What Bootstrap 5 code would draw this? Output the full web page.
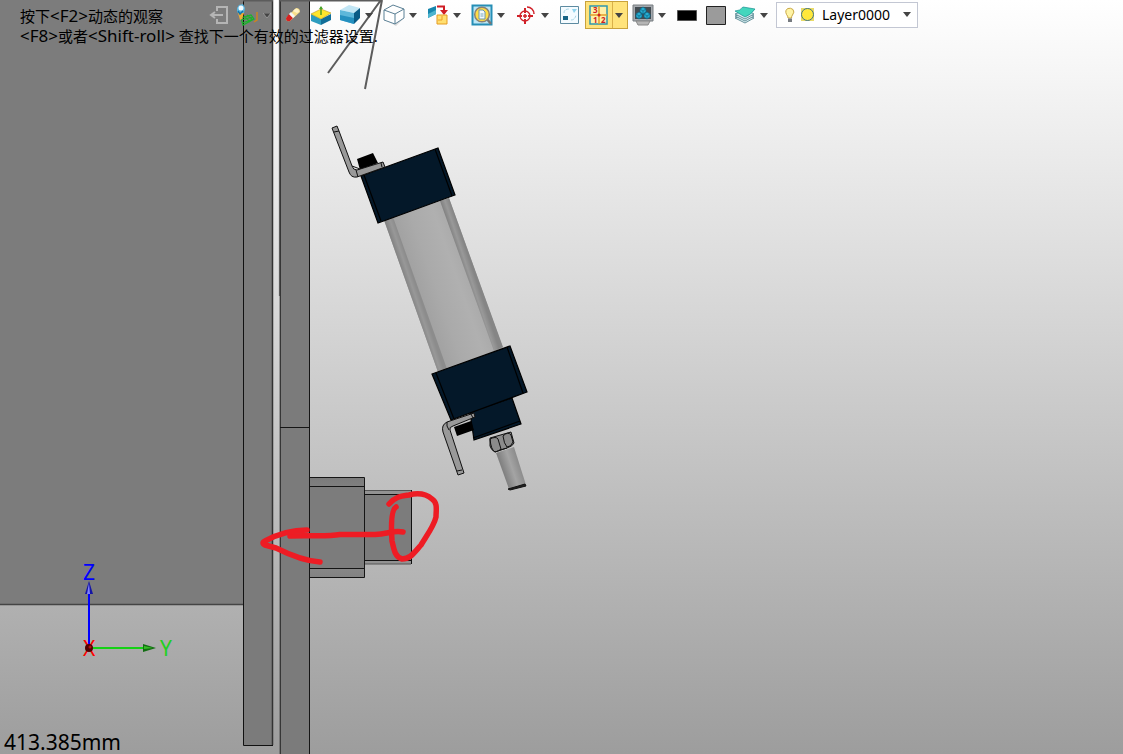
<!DOCTYPE html>
<html lang="zh-CN">
<head>
<meta charset="utf-8">
<meta name="viewport" content="width=device-width, initial-scale=1">
<title>Model view</title>
<link href="https://cdn.jsdelivr.net/npm/bootstrap@5.3.0/dist/css/bootstrap.min.css" rel="stylesheet">
<style>
  body { font-family: "Noto Sans", "Noto Sans CJK SC", sans-serif; color: #000; }
  .viewport { background: linear-gradient(#ffffff, #9d9d9d); }
  .scene { pointer-events: none; }
  .scene text { font-size: 21px; }
  .hint { font-size: 15px; line-height: 16px; padding-left: 20px; }
  .hint span { font-size: 17px; }
  .hint-lead { width: 206px; }
  .toolbar { gap: 3px; height: 28px; padding-top: 2px; }
  .tool, .drop { height: 26px; border: 0; padding: 0; background: transparent; display: flex; align-items: center; justify-content: center; }
  .tool { width: 26px; }
  .drop { width: 15px; padding-right: 3px; }
  .tool svg { width: 22px; height: 22px; }
  .split-on { background: #ffe37b; box-shadow: 0 0 0 1px #c9a23c; }
  .split-on .drop { border-left: 1px solid #d9b04a; }
  .layer-box { width: 142px; }
  .layer-box select { height: 26px; padding: 0 0 0 45px; border: 1px solid #c3c7d3; background: #fff; font-size: 14px; line-height: 24px; appearance: none; color: #000; }
  .layer-icons { left: 6px; top: 2px; pointer-events: none; }
  .layer-arrow { right: 7px; top: 10px; pointer-events: none; }
  .readout { font-size: 21px; line-height: 24px; padding-left: 4px; }
</style>
</head>
<body>
<main class="viewport position-relative min-vh-100 d-flex flex-column overflow-hidden">

  <svg class="scene position-absolute top-0 start-0 w-100 h-100" viewBox="0 0 1123 754" preserveAspectRatio="xMinYMin slice" aria-hidden="true">
    <defs>
      <linearGradient id="tube" gradientUnits="userSpaceOnUse" x1="393" y1="217" x2="447" y2="198">
        <stop offset="0" stop-color="#a2a2a2"/><stop offset=".3" stop-color="#aaaaaa"/><stop offset=".7" stop-color="#b0b0b0"/><stop offset="1" stop-color="#a8a8a8"/>
      </linearGradient>
      <linearGradient id="rodA" gradientUnits="userSpaceOnUse" x1="384" y1="220" x2="393" y2="217">
        <stop offset="0" stop-color="#808080"/><stop offset=".6" stop-color="#989898"/><stop offset="1" stop-color="#8c8c8c"/>
      </linearGradient>
      <linearGradient id="rodB" gradientUnits="userSpaceOnUse" x1="440" y1="201" x2="449" y2="198">
        <stop offset="0" stop-color="#808080"/><stop offset=".5" stop-color="#999999"/><stop offset="1" stop-color="#858585"/>
      </linearGradient>
      <linearGradient id="shaft" gradientUnits="userSpaceOnUse" x1="497" y1="453" x2="515" y2="447">
        <stop offset="0" stop-color="#808080"/><stop offset=".5" stop-color="#a4a4a4"/><stop offset="1" stop-color="#888888"/>
      </linearGradient>
      <linearGradient id="edge" x2="0" y2="1">
        <stop offset="0" stop-color="#7b7b7b"/><stop offset=".6" stop-color="#989898"/><stop offset="1" stop-color="#828282"/>
      </linearGradient>
    </defs>

    <!-- frame plates -->
    <path d="M0 0H243V604H0Z" fill="#7c7c7c"/>
    <path d="M0 604.5H243" stroke="#444" stroke-width="1.5"/>
    <path d="M243 0H273V745H243Z" fill="#7b7b7b"/>
    <path d="M243.500 0V745.500H273" fill="none" stroke="#111"/>
    <path d="M272.500 0V745" stroke="#333" stroke-width="1.500"/>
    <path d="M279.500 0H310V754H280V296H279.500Z" fill="#7b7b7b"/>
    <path d="M280.300 0V754" stroke="#333" stroke-width="1.300"/>
    <path d="M279.400 0V296" stroke="#555"/>
    <path d="M309.500 0V754M280 427.500H310" stroke="#151515" fill="none"/>
    <path d="M243 .5H273M280 .5H382M381 0L328 73M382 0L365 89" stroke="#5c5c5c" stroke-width="2" fill="none"/>

    <!-- side blocks -->
    <path d="M310 477H364V577H310Z" fill="#7c7c7c"/>
    <path d="M310 477H364V486H310ZM310 569H364V577H310Z" fill="url(#edge)"/>
    <path d="M310 477.500H364.500V577.500H310M310 486.500H364M310 568.500H364" fill="none" stroke="#151515"/>
    <path d="M365 490H411V564H365Z" fill="#7c7c7c"/>
    <path d="M365 491H411V494H365ZM365 561H411V564H365Z" fill="#929292"/>
    <path d="M365 490.500H411M365 564H411" stroke="#555"/>
    <path d="M365 494.500H411M365 560.500H411M411.500 490V564" stroke="#111"/>

    <!-- cylinder -->
    <path d="M384 220L449 198L503 348L438 372Z" fill="url(#tube)"/>
    <path d="M384 220L393 217L447 369L438 372Z" fill="url(#rodA)"/>
    <path d="M440 201L449 198L503 347L494 351Z" fill="url(#rodB)"/>
    <g fill="#041829" stroke="#000" stroke-width="1.200">
      <path d="M361 176L438 148L455 195L378 223Z"/>
      <path d="M364 175L381 221M435 149L452 196"/>
      <path d="M470 412L512 398L521 424L474 440Z"/>
      <path d="M432 374L510 346L527 392L451 420Z"/>
      <path d="M436 373L454 419M507 347L523 393M473 438L520 421"/>
    </g>
    <path d="M357 159L373 153L378 163L360 170Z M454 427L471 421L474 430L457 436Z" fill="#000"/>
    <g fill="#999" stroke="#111" stroke-linejoin="round">
      <path d="M332 128L337 126L339 131L352 166Q353 170 357 170L383 162L385 167L357 177Q351 178 349 172L333.500 132Z"/>
      <path d="M334 132L339 131M381 163L382 167M352 166L360 169M356 170L358 177" fill="none"/>
      <path d="M474 413L447 422Q441 425 443 432L458 475L464 473L450 430Q449 427 453 426L475 417Z"/>
      <path d="M457 471L462 470M447 422Q446 426 449 430M471 414L473 418" fill="none"/>
    </g>
    <path d="M496 453L514 447L526 485L509 489Z" fill="url(#shaft)"/>
    <path d="M508 489L525 484L526 486L510 490Z" fill="#222" stroke="#111"/>
    <path d="M490 438L511 432L514 443Q513 446 507 448L495 452Q491 450 490 446Z" fill="#8b8b8b" stroke="#111"/>
    <path d="M490 439Q496 436 498 439L501 449Q499 451 495 452Q491 450 490 439M503 436Q508 431 511 435L513 442Q511 447 507 447Q504 444 503 436M500 450L507 448" fill="none" stroke="#111"/>

    <!-- red pen marks -->
    <g fill="none" stroke="#ee1c24" stroke-width="5.500" stroke-linecap="round" stroke-linejoin="round">
      <path d="M389 504C396 496 402 496 409 495C417 493 425 493 432 499C438 503 436 510 436 517C434 526 427 535 421 545C413 554 410 559 402 559C395 557 394 550 392 541C391 526 391 510 396 507"/>
      <path d="M403 532C393 530 388 534 375 534.500L340 534.500C326 537 310 535 290 536"/>
      <path d="M307 530C292 530 276 535 265 541Q261 543 265 545L276 548C290 555 304 561 320 562"/>
    </g>

    <!-- axis triad -->
    <path d="M89 648V594" stroke="#0000ff" stroke-width="2"/>
    <path d="M89 581L93 594H85Z" fill="#1515a5"/><path d="M89 583L90 594H87Z" fill="#8080ff"/>
    <path d="M89 648H143" stroke="#14d114" stroke-width="2"/>
    <path d="M156 648L143 644V652Z" fill="#126d12"/><path d="M153 648L144 646V649Z" fill="#35bd25"/>
    <text x="83" y="656" fill="#ff0000" >X</text>
    <circle cx="89" cy="648" r="4" fill="#500000"/>
    <circle cx="90" cy="647" r="1.500" fill="#b01010"/>
    <text x="83" y="580" fill="#0000ff">Z</text>
    <text x="160" y="656" fill="#20d020">Y</text>
  </svg>

  <header class="position-relative">
    <div class="d-flex">
      <p class="hint hint-lead mb-0 flex-shrink-0 pt-2">按下<span>&lt;F2&gt;</span>动态的观察</p>
      <div class="toolbar d-flex flex-shrink-0" role="toolbar" aria-label="View tools">
        <button class="tool" aria-label="Exit"><svg viewBox="0 0 22 22" fill="none" stroke="#b5b5b5" stroke-width="2"><path d="M9 7V3H19V19H9V15"/><path d="M15 11H4M7 8L3 11L7 14"/></svg></button>
        <div class="d-flex">
          <button class="tool" aria-label="Walk"><svg viewBox="0 0 22 22"><path d="M4 14L14 11L17 15L6 21ZM7 12L13 18M10 11L16 16M4 16L16 13M5 19L17 15" fill="none" stroke="#18b529" stroke-width="1.200"/><path d="M20 8V16L17 18" fill="none" stroke="#cc8420" stroke-width="1.500"/><path d="M0 4L2 1L6 0L8 4L7 9L3 10L0 8Z" fill="#5bb5df"/><circle cx="4" cy="4" r="2.500" fill="#f4fbff"/><path d="M1 9L7 9L5 15L3 16Z" fill="#f0ad35"/><path d="M1 7L3 10L6 7" fill="none" stroke="#1673a8" stroke-width="1.500"/></svg></button>
          <button class="drop" aria-label="Walk options"><svg width="8" height="5"><path d="M0 0H8L4 5Z" fill="#444" stroke="#aaa" stroke-width=".7"/></svg></button>
        </div>
        <button class="tool" aria-label="Erase"><svg viewBox="0 0 22 22"><path d="M5 14L15 4Q19 4 19 8L9 17Q5 18 5 14Z" fill="#f7df8b"/><path d="M5 14L8 10L12 14L9 17Q5 18 5 14Z" fill="#d62222"/><path d="M8 10L10 8L14 12L12 14Z" fill="#f4f4f4"/><path d="M14 5Q18 4 18 8L16 9L12 7Z" fill="#fff2c4"/></svg></button>
        <button class="tool" aria-label="Workplane"><svg viewBox="0 0 22 22"><path d="M1 10L11 15V21L1 17Z" fill="#2c9cbe"/><path d="M11 15L21 10V16L11 21Z" fill="#126f98"/><path d="M1 10L11 5L21 9L11 15Z" fill="#ffe62c" stroke="#bd9720" stroke-width=".6"/><path d="M11 11V3" stroke="#3a9222" stroke-width="1.300"/><path d="M11 2L13 5H9Z" fill="#48a52a"/></svg></button>
        <div class="d-flex">
          <button class="tool" aria-label="Shaded"><svg viewBox="0 0 22 22"><path d="M1 6L10 1L21 4L15 9Z" fill="#c2e6f5"/><path d="M1 6L15 9V20L1 16Z" fill="#5db7da"/><path d="M1 11L15 14V20L1 16Z" fill="#2590bf"/><path d="M15 9L21 4V14L15 20Z" fill="#095b86"/></svg></button>
          <button class="drop" aria-label="Shading options"><svg width="8" height="5"><path d="M0 0H8L4 5Z" fill="#444"/></svg></button>
        </div>
        <div class="d-flex">
          <button class="tool" aria-label="Wireframe"><svg viewBox="0 0 22 22"><path d="M2 16L10 20L20 15L13 22Z" fill="#bbb" opacity=".5"/><path d="M1 6L10 1L21 5V14L12 20L1 16ZM1 6L12 10L21 5M12 10V20" fill="#fff" stroke="#5b8095" stroke-linejoin="round"/></svg></button>
          <button class="drop" aria-label="Wireframe options"><svg width="8" height="5"><path d="M0 0H8L4 5Z" fill="#444"/></svg></button>
        </div>
        <div class="d-flex">
          <button class="tool" aria-label="Align view"><svg viewBox="0 0 22 22"><path d="M1 5L9 2V10L1 14Z" fill="#1686ad"/><path d="M1 10L9 6V10L1 14Z" fill="#4db4ce"/><path d="M10 2.500H17V8" fill="none" stroke="#cf1d25" stroke-width="2"/><path d="M13 6H21L17 11Z" fill="#cf1d25"/><path d="M10 11H20V20H10Z" fill="#ffdf70" stroke="#e59b20"/><path d="M11 16H15V12" fill="none" stroke="#ef9f26"/></svg></button>
          <button class="drop" aria-label="Align options"><svg width="8" height="5"><path d="M0 0H8L4 5Z" fill="#444"/></svg></button>
        </div>
        <div class="d-flex">
          <button class="tool" aria-label="Zoom all"><svg viewBox="0 0 22 22"><path d="M1.500 1.500H20.500V20.500H1.500Z" fill="#bce7f6" stroke="#268eb5" stroke-width="2"/><path d="M16 15L20 20" stroke="#777" stroke-width="2.500"/><circle cx="11" cy="10.500" r="7.300" fill="#ffdc45" stroke="#8b8175" stroke-width="1.500"/><path d="M8 6H12L14 8V15H8Z" fill="#f3f9fc" stroke="#6d96a9"/><path d="M9.500 10H12.500M9.500 12H12.500" stroke="#79a9c0"/></svg></button>
          <button class="drop" aria-label="Zoom options"><svg width="8" height="5"><path d="M0 0H8L4 5Z" fill="#444"/></svg></button>
        </div>
        <div class="d-flex">
          <button class="tool" aria-label="Rotate centre"><svg viewBox="0 0 22 22" fill="none" stroke="#d02028"><circle cx="10" cy="12" r="5" stroke-width="1.300"/><path d="M10 4V9M10 15V20M2 12H7M13 12H18" stroke-width="2"/><path d="M8 12H12M10 10V14" stroke-width="1.500"/><path d="M12 3C16 3 19 6 19 10" stroke-width="1.500"/></svg></button>
          <button class="drop" aria-label="Rotate options"><svg width="8" height="5"><path d="M0 0H8L4 5Z" fill="#444"/></svg></button>
        </div>
        <button class="tool" aria-label="View window"><svg viewBox="0 0 22 22"><path d="M1.500 2.500H19.500V19.500H1.500Z" fill="#f4fbff" stroke="#5d8ba1"/><path d="M4 12H9V16H4Z" fill="#176486"/><path d="M5 9Q5 5 10 5M12 16Q16 16 17 11" fill="none" stroke="#a7d5e5" stroke-dasharray="3 1"/><path d="M13 5H18L15 9Z" fill="#91d4ed"/></svg></button>
        <div class="d-flex split-on">
          <button class="tool" aria-label="Numbered views"><svg viewBox="0 0 22 22"><path d="M2 2H19V20H2Z" fill="#fff0a8" stroke="#3097ad" stroke-width="1.500"/><path d="M11 2V11H19M2 11H11V20" fill="none" stroke="#e1a12a" stroke-width="1.500"/><g fill="#d02020" font-size="8" font-weight="700"><text x="5" y="9">3</text><text x="5" y="19">1</text><text x="13" y="19">2</text></g><circle cx="11" cy="11" r="1.500" fill="#d02020"/></svg></button>
          <button class="drop" aria-label="Numbered view options"><svg width="8" height="5"><path d="M0 0H8L4 5Z" fill="#444"/></svg></button>
        </div>
        <div class="d-flex">
          <button class="tool" aria-label="Display"><svg viewBox="0 0 22 22"><path d="M1 1H21V17H1Z" fill="#a6aaaf" stroke="#777c80"/><path d="M3 3H19V15H3Z" fill="#434b51"/><path d="M4 17H18L16 21H6Z" fill="#b5b5b5" stroke="#888"/><g fill="#27add0" stroke="#0b6687" stroke-width=".7"><path d="M8 5L11 3L14 5V8L11 10L8 8ZM4 10L7 8L10 10V13L7 15L4 13ZM12 10L15 8L18 10V13L15 15L12 13Z"/><path d="M8 5L11 7L14 5M11 7V10M4 10L7 12L10 10M7 12V15M12 10L15 12L18 10M15 12V15" fill="none"/></g></svg></button>
          <button class="drop" aria-label="Display options"><svg width="8" height="5"><path d="M0 0H8L4 5Z" fill="#444"/></svg></button>
        </div>
        <button class="tool" aria-label="Line colour"><svg viewBox="0 0 22 22"><path d="M1.500 6.500H20.500V16.500H1.500Z" stroke="#555"/></svg></button>
        <button class="tool" aria-label="Face colour"><svg viewBox="0 0 22 22"><path d="M1.500 2.500H20.500V20.500H1.500Z" fill="#9b9b9b" stroke="#222"/></svg></button>
        <div class="d-flex">
          <button class="tool" aria-label="Layers"><svg viewBox="0 0 22 22"><g fill="#d8edf0" stroke="#477b87" stroke-width=".8"><path d="M1 14L11 19L20 14L12 10Z"/><path d="M1 12L11 17L20 12L12 8Z"/><path d="M1 10L11 15L20 10L12 6Z"/></g><path d="M1 7Q6 7 9 3L21 5Q17 11 11 13Z" fill="#43d6bd" stroke="#168f91" stroke-width=".7"/></svg></button>
          <button class="drop" aria-label="Layer options"><svg width="8" height="5"><path d="M0 0H8L4 5Z" fill="#444"/></svg></button>
        </div>
        <div class="layer-box position-relative">
          <label class="visually-hidden" for="layer">Layer</label>
          <select id="layer" class="w-100 d-block rounded-0"><option>Layer0000</option></select>
          <svg class="layer-icons position-absolute" width="36" height="22" viewBox="0 0 36 22"><path d="M6 14Q6 12 4.500 10.500Q2.500 6 6 4.500Q8.500 3.500 11 5.500Q13 8 10.500 11Q9.500 12 9.500 14Z" fill="#fff4a5" stroke="#c9a845"/><path d="M6 14.500H10V18H6Z" fill="#777b80"/><path d="M19 4H32V17H19Z" fill="#eadb68"/><circle cx="25.500" cy="10.500" r="6" fill="#ffe83b" stroke="#417584"/></svg>
          <svg class="layer-arrow position-absolute" width="8" height="5"><path d="M0 0H8L4 5Z" fill="#444"/></svg>
        </div>
      </div>
    </div>
    <p class="hint mb-0"><span>&lt;F8&gt;</span>或者<span>&lt;Shift-roll&gt;</span> 查找下一个有效的过滤器设置.</p>
  </header>

  <output class="readout position-relative mt-auto">413.385mm</output>
</main>
<script src="https://cdn.jsdelivr.net/npm/bootstrap@5.3.0/dist/js/bootstrap.bundle.min.js"></script>
</body>
</html>
